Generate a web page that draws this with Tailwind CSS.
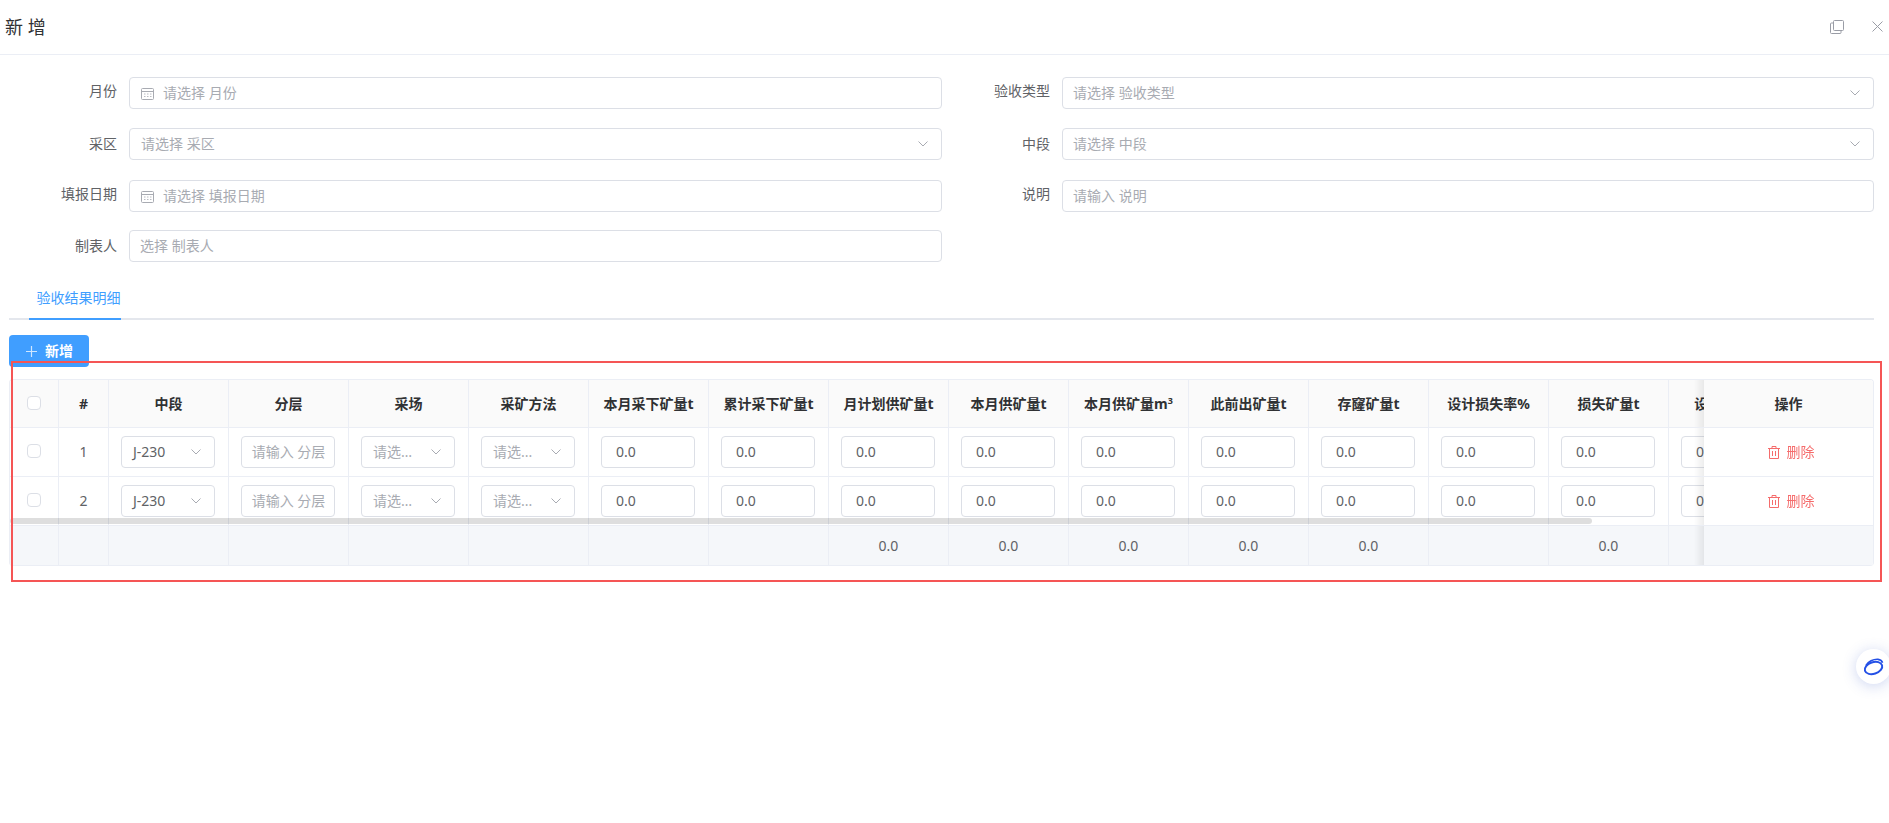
<!DOCTYPE html>
<html lang="zh-CN">
<head>
    <meta charset="UTF-8">
    <meta name="viewport" content="width=device-width, initial-scale=1.0">
    <title>新增</title>
    <script src="https://cdn.jsdelivr.net/npm/@tailwindcss/browser@4"></script>
</head>
<body class="relative h-[823px] overflow-hidden bg-white text-sm text-[#606266] font-['Noto_Sans','Noto_Sans_CJK_SC',sans-serif]">

    <!-- Dialog header -->
    <header class="flex h-[55px] items-center justify-between border-b border-[#ebeef5] pb-[1px] pl-[5px] pr-[6px]">
        <h1 class="text-lg leading-none text-[#303133]">新 增</h1>
        <div class="flex items-center gap-[28px] text-[#9a9da6]">
            <svg class="h-[14px] w-[14px]" viewBox="0 0 14 14" fill="none" stroke="currentColor" stroke-width="1"><rect x="3.5" y="0.5" width="10" height="10" rx="1"/><path d="M3 3H1.500a1 1 0 0 0-1 1v8.500a1 1 0 0 0 1 1H10a1 1 0 0 0 1-1V11"/></svg>
            <svg class="h-[11px] w-[11px]" viewBox="0 0 11 11" fill="none" stroke="currentColor" stroke-width="1"><path d="M0.500 0.500l10 10M10.500 0.500l-10 10"/></svg>
        </div>
    </header>

    <!-- Form -->
    <form class="pt-[22px] pr-[15px]">
        <div class="flex">
            <div class="flex w-[942px] items-center">
                <label class="w-[129px] pb-[4px] pr-3 text-right">月份</label>
                <div class="flex h-8 w-[813px] items-center rounded border border-[#dcdfe6] pl-[11px] text-[#a8abb2]">
                    <svg class="mr-[9px] h-[13px] w-[13px] text-[#a8abb2]" viewBox="0 0 13 13" fill="none" stroke="currentColor"><rect x="0.500" y="1.500" width="12" height="11" rx="1"/><path d="M0.500 4.500h12"/><path d="M3 7h1.500M6 7h1.500M9 7h1.500M3 9.500h1.500M6 9.500h1.500M9 9.500h1.500" stroke-width="0.800"/></svg>
                    请选择 月份
                </div>
            </div>
            <div class="flex flex-1 items-center">
                <label class="w-[120px] pb-[4px] pr-3 text-right">验收类型</label>
                <div class="flex h-8 flex-1 items-center justify-between rounded border border-[#dcdfe6] pl-[10px] pr-[13px] text-[#a8abb2]">
                    请选择 验收类型
                    <svg class="h-[6px] w-[10px]" viewBox="0 0 10 6" fill="none" stroke="#a8abb2"><path d="M0.500 0.500L5 5l4.500-4.500"/></svg>
                </div>
            </div>
        </div>
        <div class="mt-[19px] flex">
            <div class="flex w-[942px] items-center">
                <label class="w-[129px] pb-[1px] pr-3 text-right">采区</label>
                <div class="flex h-8 w-[813px] items-center justify-between rounded border border-[#dcdfe6] pl-[11px] pr-[13px] text-[#a8abb2]">
                    请选择 采区
                    <svg class="h-[6px] w-[10px]" viewBox="0 0 10 6" fill="none" stroke="#a8abb2"><path d="M0.500 0.500L5 5l4.500-4.500"/></svg>
                </div>
            </div>
            <div class="flex flex-1 items-center">
                <label class="w-[120px] pb-[1px] pr-3 text-right">中段</label>
                <div class="flex h-8 flex-1 items-center justify-between rounded border border-[#dcdfe6] pl-[10px] pr-[13px] text-[#a8abb2]">
                    请选择 中段
                    <svg class="h-[6px] w-[10px]" viewBox="0 0 10 6" fill="none" stroke="#a8abb2"><path d="M0.500 0.500L5 5l4.500-4.500"/></svg>
                </div>
            </div>
        </div>
        <div class="mt-[20px] flex">
            <div class="flex w-[942px] items-center">
                <label class="w-[129px] pb-[4px] pr-3 text-right">填报日期</label>
                <div class="flex h-8 w-[813px] items-center rounded border border-[#dcdfe6] pl-[11px] text-[#a8abb2]">
                    <svg class="mr-[9px] h-[13px] w-[13px] text-[#a8abb2]" viewBox="0 0 13 13" fill="none" stroke="currentColor"><rect x="0.500" y="1.500" width="12" height="11" rx="1"/><path d="M0.500 4.500h12"/><path d="M3 7h1.500M6 7h1.500M9 7h1.500M3 9.500h1.500M6 9.500h1.500M9 9.500h1.500" stroke-width="0.800"/></svg>
                    请选择 填报日期
                </div>
            </div>
            <div class="flex flex-1 items-center">
                <label class="w-[120px] pb-[4px] pr-3 text-right">说明</label>
                <input placeholder="请输入 说明" class="h-8 flex-1 rounded border border-[#dcdfe6] pb-[2px] pl-[10px] outline-none placeholder:text-[#a8abb2]">
            </div>
        </div>
        <div class="mt-[18px] flex">
            <div class="flex w-[942px] items-center">
                <label class="w-[129px] pr-3 text-right">制表人</label>
                <input placeholder="选择 制表人" class="h-8 w-[813px] rounded border border-[#dcdfe6] pb-[2px] pl-[10px] outline-none placeholder:text-[#a8abb2]">
            </div>
        </div>
    </form>

    <!-- Tabs -->
    <div class="ml-[9px] mr-[15px] mt-[18px] flex h-[40px] border-b-2 border-[#e4e7ed]">
        <div class="-mb-[2px] ml-[20px] flex h-[40px] w-[92px] items-center justify-center border-b-2 border-[#409eff] pb-[2px] pl-[7px] text-[#409eff]">验收结果明细</div>
    </div>

    <button class="ml-[9px] mt-[15px] flex h-8 w-[80px] items-center rounded bg-[#409eff] pl-[17px] font-bold text-white">
        <svg class="mr-[8px] h-[11px] w-[11px]" viewBox="0 0 11 11" fill="none" stroke="#cfe6ff" stroke-width="1.200"><path d="M5.500 0v11M0 5.500h11"/></svg>
        新增
    </button>

    <!-- Detail table -->
    <div class="relative ml-[9px] mt-[12px] w-[1865px]">
        <div class="overflow-hidden rounded-sm border-x border-t border-[#ebeef5]">
            <table class="w-[1948px] table-fixed border-separate border-spacing-0 text-center">
                <colgroup id="cols"></colgroup>
                <thead><tr id="headRow"></tr></thead>
                <tbody id="rows"></tbody>
                <tfoot><tr id="footRow"></tr></tfoot>
            </table>
        </div>
        <!-- horizontal scrollbar thumb -->
        <div class="absolute left-[1px] top-[139px] h-[6px] w-[1582px] rounded-full bg-black/[0.13]"></div>
    </div>

    <!-- Red annotation box -->
    <div class="pointer-events-none absolute left-[11px] top-[361px] h-[221px] w-[1871px] border-2 border-[#f55555]"></div>

    <!-- Floating helper button -->
    <div class="absolute left-[1856px] top-[649px] flex h-[35px] w-[35px] items-center justify-center rounded-full bg-white pr-[1px] shadow-[0_2px_14px_rgba(60,90,200,0.25)]">
        <svg class="h-[18px] w-[21px]" viewBox="0 0 21 18" fill="none" stroke="#2450e6" stroke-width="2"><ellipse cx="10.500" cy="10" rx="9" ry="5.800" transform="rotate(-18 10.500 10)"/><path d="M3 7.500C5 3.500 10.500 1 15 1.300c2.500.2 4 1.500 4.500 3.500" stroke-width="1.700"/></svg>
    </div>

    <script>
        // Column titles, left to right
        const titles = ['中段', '分层', '采场', '采矿方法', '本月采下矿量t', '累计采下矿量t', '月计划供矿量t', '本月供矿量t', '本月供矿量m<sup class="text-[9px]">3</sup>', '此前出矿量t', '存窿矿量t', '设计损失率%', '损失矿量t', '设计贫化%'];
        const footerValues = ['', '', '', '', '', '', '0.0', '0.0', '0.0', '0.0', '0.0', '', '0.0', ''];

        const chevron = `<svg class="h-[6px] w-[10px] shrink-0" viewBox="0 0 10 6" fill="none" stroke="#a8abb2"><path d="M0.500 0.500L5 5l4.500-4.500"/></svg>`;
        const trash = `<svg class="mr-[7px] h-[13px] w-[12px]" viewBox="0 0 12 13" fill="none" stroke="#f56c6c"><path d="M0 2.500h12M4 2.500V.5h4v2M1.500 2.500v10h9v-10M4.500 5v5M7.500 5v5"/></svg>`;
        const checkbox = `<span class="mx-auto block h-[14px] w-[14px] rounded-sm border border-[#dcdfe6] bg-white"></span>`;
        const opShadow = `<div class="absolute inset-y-0 -left-[10px] w-[10px] bg-linear-to-l from-black/[0.07] to-transparent"></div>`;

        const selectBox = (text, textClass) => `<div class="ml-[12px] flex h-8 w-[94px] items-center justify-between rounded border border-[#dcdfe6] pl-[11px] pr-[13px] ${textClass}"><span>${text}</span>${chevron}</div>`;
        const numberBox = `<input value="0.0" class="ml-[12px] block h-8 w-[94px] rounded border border-[#dcdfe6] pb-[1px] pl-[14px] text-[#606266] outline-none">`;

        document.getElementById('cols').innerHTML =
            `<col class="w-[49px]"><col class="w-[50px]">` +
            titles.map(() => `<col class="w-[120px]">`).join('') +
            `<col class="w-[169px]">`;

        document.getElementById('headRow').innerHTML =
            `<th class="h-[48px] border-b border-r border-[#ebeef5] bg-[#fafafa]"><div class="-mt-[2px]">${checkbox}</div></th>` +
            `<th class="h-[48px] border-b border-r border-[#ebeef5] bg-[#fafafa] font-bold text-[#303133]">#</th>` +
            titles.map(t => `<th class="h-[48px] overflow-hidden whitespace-nowrap border-b border-r border-[#ebeef5] bg-[#fafafa] font-bold text-[#303133]">${t}</th>`).join('') +
            `<th class="sticky right-0 h-[48px] border-b border-[#ebeef5] bg-[#fafafa] font-bold text-[#303133]">${opShadow}操作</th>`;

        document.getElementById('rows').innerHTML = [1, 2].map(n => {
            const cells = titles.map((t, i) => {
                let inner = numberBox;
                if (i === 0) inner = selectBox('J-230', 'text-[#606266]');
                if (i === 1) inner = `<div class="ml-[12px] flex h-8 w-[94px] items-center justify-center rounded border border-[#dcdfe6] pl-[1px] text-[#a8abb2]">请输入 分层</div>`;
                if (i === 2) inner = selectBox('请选…', 'text-[#a8abb2]');
                if (i === 3) inner = selectBox('请选...', 'text-[#a8abb2]');
                return `<td class="h-[49px] border-b border-r border-[#ebeef5]">${inner}</td>`;
            }).join('');
            return `<tr>
                <td class="h-[49px] border-b border-r border-[#ebeef5]"><div class="-mt-[3px]">${checkbox}</div></td>
                <td class="h-[49px] border-b border-r border-[#ebeef5]">${n}</td>
                ${cells}
                <td class="sticky right-0 h-[49px] border-b border-[#ebeef5] bg-white">${opShadow}<div class="flex items-center justify-center pl-[5px] text-[#f56c6c]">${trash}删除</div></td>
            </tr>`;
        }).join('');

        document.getElementById('footRow').innerHTML =
            `<td class="h-[40px] border-b border-r border-[#ebeef5] bg-[#f5f7fa]"></td><td class="h-[40px] border-b border-r border-[#ebeef5] bg-[#f5f7fa]"></td>` +
            footerValues.map(v => `<td class="h-[40px] border-b border-r border-[#ebeef5] bg-[#f5f7fa]">${v}</td>`).join('') +
            `<td class="sticky right-0 h-[40px] border-b border-[#ebeef5] bg-[#f5f7fa]">${opShadow}</td>`;
    </script>
</body>
</html>
